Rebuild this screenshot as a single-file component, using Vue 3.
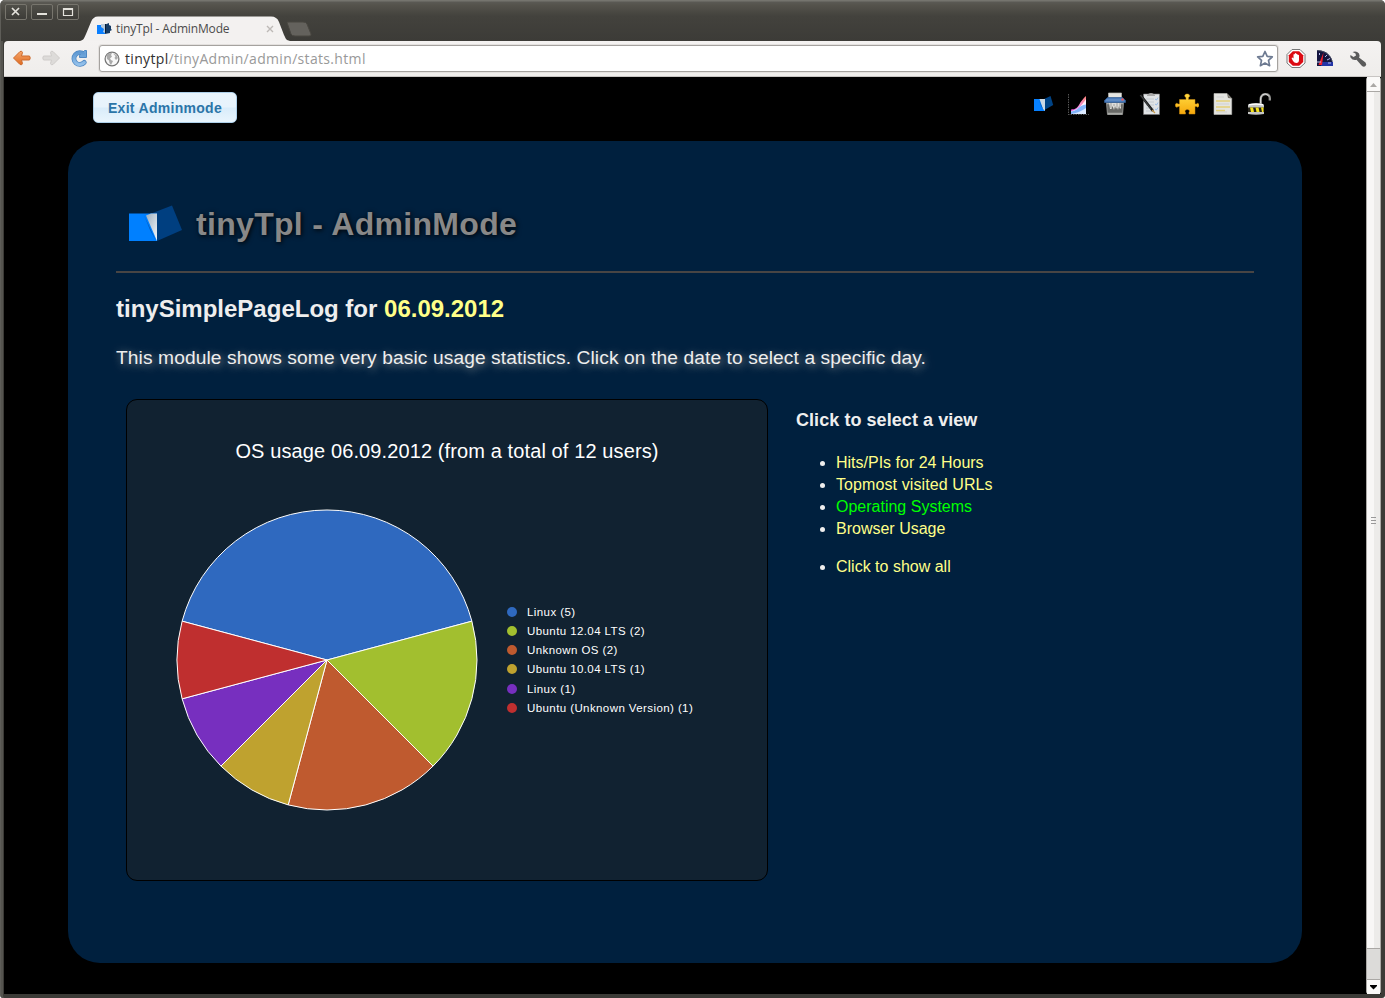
<script setup>
const slices = [
  { label: 'Linux (5)', n: 5, color: '#2f69bf' },
  { label: 'Ubuntu 12.04 LTS (2)', n: 2, color: '#a2bf2f' },
  { label: 'Unknown OS (2)', n: 2, color: '#bf5a2f' },
  { label: 'Ubuntu 10.04 LTS (1)', n: 1, color: '#bfa22f' },
  { label: 'Linux (1)', n: 1, color: '#772fbf' },
  { label: 'Ubuntu (Unknown Version) (1)', n: 1, color: '#bf2f2f' },
]
let angle = -75
for (const s of slices) {
  const pt = (a) => {
    const r = (a * Math.PI) / 180
    return `${(151 + 150 * Math.sin(r)).toFixed(2)} ${(151 - 150 * Math.cos(r)).toFixed(2)}`
  }
  const end = angle + s.n * 30
  s.d = `M151 151L${pt(angle)}A150 150 0 0 1 ${pt(end)}Z`
  angle = end
}
const views = ['Hits/PIs for 24 Hours', 'Topmost visited URLs', 'Operating Systems', 'Browser Usage']
</script>

<template>
  <div class="window">
    <header class="titlebar">
      <div class="controls">
        <span class="wbtn"><svg width="20" height="14"><path d="M6 3L13 10M13 3L6 10" stroke="#e4e2dc" stroke-width="1.7" /></svg></span>
        <span class="wbtn"><svg width="20" height="14"><path d="M5 9H15" stroke="#e4e2dc" stroke-width="2" /></svg></span>
        <span class="wbtn"><svg width="20" height="14"><path d="M5.500 3.500H14.500V10.500H5.500Z" stroke="#e4e2dc" fill="none" stroke-width="1.200" /><path d="M5 4H15" stroke="#e4e2dc" stroke-width="2" /></svg></span>
      </div>
      <div class="tab">
        <svg class="tabshape" width="214" height="25"><path d="M0 25C4 24 4 22 6 18L11 6Q13 0.500 18 0.500H191Q197 0.500 199 6L204 19C206 23 206 24 210 25Z" fill="#f3f1f0" /></svg>
        <svg class="fav" width="15" height="11"><path d="M7 2L12 0V2L14 3V6L15 7L13 8V10L8 11Z" fill="#163c66" /><path d="M0 2H8V11H0Z" fill="#0a7fff" /><path d="M4 1H8V10L6 9L7 6L4 4Z" fill="#b9cbdc" /><path d="M8 1H9V10H8Z" fill="#061a35" /></svg>
        <span class="tabtitle">tinyTpl - AdminMode</span>
        <svg class="tabx" width="8" height="8"><path d="M1 1L7 7M7 1L1 7" stroke="#bdb9b6" stroke-width="1.400" /></svg>
      </div>
      <svg class="newtab" width="26" height="16"><path d="M1 1.500Q1 1 3 1H17Q20 1 21 3L25 13Q25.500 15 23 15H9Q6 15 5 13Z" fill="#64625d" stroke="#494741" /></svg>
    </header>

    <div class="toolbar">
      <svg class="nav" width="90" height="30" viewBox="0 0 90 30">
        <defs>
          <linearGradient id="org" x1="0" y1="0" x2="0" y2="1"><stop offset="0" stop-color="#f7a76d" /><stop offset="1" stop-color="#de6a20" /></linearGradient>
          <linearGradient id="blu" x1="0" y1="0" x2="0" y2="1"><stop offset="0" stop-color="#5f99d2" /><stop offset="1" stop-color="#93c0ea" /></linearGradient>
        </defs>
        <path d="M1.500 14L8 7.500Q10 6.500 10.500 8.500L9.500 12H17.500Q19 14 17.500 16H9.500L10.500 19.500Q10 21.500 8 20.500Z" fill="url(#org)" stroke="#cd6b2e" stroke-linejoin="round" />
        <path d="M47.500 14L41 7.500Q39 6.500 38.500 8.500L39.500 12H31.500Q30 14 31.500 16H39.500L38.500 19.500Q39 21.500 41 20.500Z" fill="#dddbd9" stroke="#cfccca" stroke-linejoin="round" />
        <path d="M71.800 10.200A5.900 5.900 0 1 0 72.300 18.400" fill="none" stroke="#4f88c3" stroke-width="4.800" stroke-linecap="round" />
        <path d="M74.500 6.500V13.500H67.500V11.500L72.500 6.500Z" fill="#6ca4da" stroke="#4f88c3" stroke-linejoin="round" />
        <path d="M71.800 10.200A5.900 5.900 0 1 0 72.300 18.400" fill="none" stroke="url(#blu)" stroke-width="3.200" stroke-linecap="round" />
      </svg>
      <div class="omnibox">
        <svg width="16" height="16" viewBox="0 0 16 16"><circle cx="8" cy="8" r="6.900" fill="#f8f8f8" stroke="#777" stroke-width="1.300" /><path d="M2.500 4.500L5 2.300L8 2L7 4L8 5.500L6 7.500L7 9L9 10L8 12L7 14L5.500 12L5 9.500L3 8ZM9 2.500L12.500 4L14 7L12 9L10.500 7L11.500 5Z" fill="#aaa" /></svg>
        <span class="url"><b>tinytpl</b>/tinyAdmin/admin/stats.html</span>
        <svg class="star" width="18" height="18" viewBox="0 0 18 18"><path d="M9 1.500L11.200 6.300L16.300 6.900L12.500 10.400L13.600 15.700L9 13L4.400 15.700L5.500 10.400L1.700 6.900L6.800 6.300Z" fill="#fff" stroke="#6d7a91" stroke-width="1.700" stroke-linejoin="round" /></svg>
      </div>
      <svg class="ext" width="88" height="20" viewBox="0 0 88 20">
        <path d="M6 .5H14L19 5.500V14L14 18.500H6L1 14V5.500Z" fill="#fff" stroke="#777" />
        <path d="M6.800 2.300H13.200L17.200 6.200V13L13.200 16.800H6.800L2.800 13V6.200Z" fill="#dc0b12" />
        <path d="M7 12L5.500 9L6.500 8.500L7.500 9.500V5.500Q8.300 4.500 8.800 5.500V4.500Q9.600 3.500 10.200 4.500V5Q11 4.200 11.500 5.200V6Q12.500 5.300 13 6.300V11Q13 14 10.300 14Q8.300 14 7 12Z" fill="#fff" />
        <path d="M31 1.500C39 .5 46 6 47 15V17H31Z" fill="#14153f" /><path d="M31 1.500C38 1.500 44 5.500 46 12" stroke="#444b61" fill="none" />
        <path d="M35.500 13H47V17H35Z" fill="#2334a5" /><path d="M32.500 16L37.500 3.500L36 16Z" fill="#f1212c" /><path d="M31 13H35M39 8L41 6M41 11L44 9.500M33.500 6V4M42 14H45" stroke="#b7bce8" />
        <path d="M66.500 3Q70.500 1.500 73 4.500Q74 6.500 73 8.500L79.500 13.500Q81 15.500 79.500 17Q78 18.500 76 17L70.500 10.800Q67 12 64.500 8.500Q64 7 64.500 6L67.500 8L70 6.500L69.500 4.500Z" fill="#5b5b5b" />
      </svg>
    </div>

    <div class="viewport">
      <main class="page">
        <div class="topline">
          <button class="exit">Exit Adminmode</button>
          <nav class="icons">
            <svg viewBox="0 0 24 24"><path d="M12 7.500L19.500 4L22.200 13L13.500 18Z" fill="#004385" /><path d="M3 7H14V19H3Z" fill="#0680ff" /><path d="M8.500 7H14V19L12 17Z" fill="#cbd9e5" /><path d="M8 8L12.500 18L10 14Z" fill="#0b56a8" /></svg>
            <svg viewBox="0 0 24 24">
              <defs><linearGradient id="red" x1="1" y1="0" x2="0" y2="1"><stop offset="0" stop-color="#ff8178" /><stop offset=".55" stop-color="#f092e2" /><stop offset="1" stop-color="#d82cc9" /></linearGradient></defs>
              <path d="M4 22V17.500C8 17 9.500 17 12 13C14 9 16 7 19 4V22Z" fill="url(#red)" /><path d="M4 22V19C10 18 14 15 19 7V22Z" fill="#fff0fa" /><path d="M4 22V19.500C11 19 12 13 19 12.500V22Z" fill="#82b4fb" /><path d="M4 22Q12 21 19 16V22Z" fill="#dceaff" /><path d="M1.500 2V23M1 22.500H22" stroke="#555" stroke-dasharray="1.500 1" />
            </svg>
            <svg viewBox="0 0 24 24"><path d="M3.500 10H20.500L19.500 22.500H4.500Z" fill="#686966" stroke="#929390" /><path d="M4 11.500H20M5 21.500H19" stroke="#a9aaa6" stroke-width="1.500" /><path d="M5.500 1H18.500V7H5.500Z" fill="#e5e5e2" stroke="#b8b8b2" stroke-width=".7" /><path d="M4.500 5.500H19.500L22.500 8.500V10.500H1.500V8.500Z" fill="#4979b7" stroke="#315c93" stroke-width=".7" /><path d="M3 8H21" stroke="#739bce" /><path d="M18.500 7.500H20.500" stroke="#ff4f47" stroke-width="2" /><path d="M6 11H18V16L17 17L16 14L15 18L14 15L13 17L12 14L11 18L9.500 14L8.500 17L7 17Z" fill="#dededb" /><path d="M8 11V16M11 12V14M14 11V15M17 11V15" stroke="#777" stroke-width=".6" /></svg>
            <svg viewBox="0 0 24 24"><path d="M4.500 2H20.500V22.500H4.500Z" fill="#e0e3e5" stroke="#777" stroke-width=".6" /><path d="M8 3Q12 -1 16 3V4H8Z" fill="#aaa" /><path d="M7 7H15M7 10H15M7 13H15M7 16H15M7 19H15" stroke="#bcc3c9" stroke-width=".8" /><path d="M16 7L17.500 8L19 5.500M16 12L17.500 13L19 10.500M16 17L17.500 18L19 15.500" stroke="#83aee7" fill="none" stroke-width=".8" /><path d="M1.500 3L14 19" stroke="#17191a" stroke-width="2.400" /><path d="M13 18L16 21" stroke="#c79a4b" stroke-width="1.300" /><path d="M1.500 3L12 17" stroke="#666" stroke-width=".6" /></svg>
            <svg viewBox="0 0 24 24"><defs><linearGradient id="gold" x1="0" y1="0" x2="0" y2="1"><stop offset="0" stop-color="#ffdb42" /><stop offset="1" stop-color="#f6a80b" /></linearGradient></defs><path d="M4.500 7.500H11V5.500C8.500 4 10 2 12.200 2S16 4 13.500 5.500V7.500H20V12H21.500C22.500 10.500 24 11.500 24 13.200S22.500 16 21.500 14.500H20V22H14V20.500C15.500 18.500 13.500 17.500 12.300 17.500S9 18.500 10.500 20.500V22H4.500V14.500H3C2 16 .3 15 .3 13.200S2 10.500 3 12H4.500Z" fill="url(#gold)" stroke="#c88911" stroke-width=".5" /></svg>
            <svg viewBox="0 0 24 24"><path d="M3 1.500H16L20.700 6.500V22.500H3Z" fill="#e4e4e0" stroke="#c0c0ba" stroke-width=".6" /><path d="M16 1.500L20.700 6.500L17 6Z" fill="#77736a" /><path d="M5.500 5H13M5.500 12H18M5.500 20H16" stroke="#d0d1d2" /><path d="M5 9H19M5 15H19M5 18.500H14" stroke="#e3cf78" stroke-width="1.300" /></svg>
            <svg viewBox="0 0 24 24"><path d="M13.700 12V7.500C13.700 .5 22.800 .5 22.800 6V8.500" fill="none" stroke="#969693" stroke-width="2.300" /><path d="M13.600 11V7C14 1 20 1 22 4.500" fill="none" stroke="#e8e8e6" stroke-width=".9" /><path d="M1 12.500Q9 10.500 17 12.500V22Q9 23.500 1 22Z" fill="#c5c6c4" /><path d="M2 12.800Q9 11.300 16 12.800" stroke="#fff" stroke-width="1.500" fill="none" /><path d="M1 15.500H17V20H1Z" fill="#25231a" /><path d="M3 15.500H6L7 20H4ZM8.500 15.500H11.500L12.500 20H9.500ZM14 15.500H16.500V20H15Z" fill="#f6e31c" /></svg>
          </nav>
        </div>

        <section class="panel">
          <h1>
            <svg class="logo" width="54" height="38" viewBox="0 0 54 38"><defs><linearGradient id="fold" x1="0" y1="0" x2="1" y2="1"><stop offset="0" stop-color="#9cafbf" /><stop offset="1" stop-color="#f4f7fa" /></linearGradient></defs><path d="M17 10.500L43 .5L53 25L28 36Z" fill="#003f80" /><path d="M0 8.500H28V36H0Z" fill="#0080ff" /><path d="M15 10L27 36L21 25Z" fill="#00469a" opacity=".65" /><path d="M17 10.500L22 8.500H28V36Z" fill="url(#fold)" /></svg>
            <span>tinyTpl - AdminMode</span>
          </h1>
          <h2>tinySimplePageLog for <a>06.09.2012</a></h2>
          <p class="intro">This module shows some very basic usage statistics. Click on the date to select a specific day.</p>
          <div class="row">
            <figure class="chart">
              <figcaption>OS usage 06.09.2012 (from a total of 12 users)</figcaption>
              <div class="plot">
                <svg width="302" height="302"><path v-for="s in slices" :key="s.d" :d="s.d" :fill="s.color" stroke="#fff" stroke-linejoin="round" /></svg>
                <ul class="legend">
                  <li v-for="s in slices" :key="s.label"><svg width="10" height="10"><circle cx="5" cy="5" r="5" :fill="s.color" /></svg><span>{{ s.label }}</span></li>
                </ul>
              </div>
            </figure>
            <aside>
              <h3>Click to select a view</h3>
              <ul>
                <li v-for="v in views" :key="v" :class="{ active: v === 'Operating Systems' }"><a>{{ v }}</a></li>
              </ul>
              <ul><li><a>Click to show all</a></li></ul>
            </aside>
          </div>
        </section>
      </main>
      <div class="scroll">
        <span class="sb up"><svg width="13" height="14"><path d="M3 10L6.500 6L10 10Z" fill="#aaa8a5" /></svg></span>
        <span class="thumb"><i></i><i></i><i></i></span>
        <span class="trough"></span>
        <span class="sb"><svg width="13" height="14"><path d="M3 5H10V6L6.500 9.500L3 6Z" fill="#000" /></svg></span>
      </div>
    </div>
  </div>
</template>

<style>
body { margin: 0; background: #fff; overflow: hidden; }
</style>

<style scoped>
* { box-sizing: border-box; }
.window { width: 1385px; height: 998px; background: #3c3b37; border-radius: 5px 5px 3px 3px; padding: 0 4px 4px 3px; border-left: 1px solid #5e5d58; font-family: "Liberation Sans", Arial, sans-serif; overflow: hidden; box-shadow: inset 2px 0 #55544f; }
.titlebar { height: 41px; margin: 0 -4px 0 -3px; padding-left: 4px; display: flex; background: linear-gradient(#75746e 0, #75746e 1px, #5a5954 2px, #55534c 5px, #43423d 16px, #3c3b37 41px); }
.controls { display: flex; gap: 4px; padding-top: 4px; width: 75px; flex: none; }
.wbtn { width: 22px; height: 16px; border: 1px solid #77756d; border-radius: 2px; background: linear-gradient(#504f49, #3d3c38); display: flex; }
.wbtn svg { display: block; }
.tab { position: relative; width: 207px; height: 25px; margin-top: 16px; flex: none; display: flex; align-items: center; padding-left: 17px; }
.tabshape { position: absolute; left: 0; top: 0; }
.fav { position: relative; flex: none; margin: 0 4px 0 0; }
.tabtitle { position: relative; font: 12px/24px "Open Sans", "Noto Sans", sans-serif; color: #4b4b4b; width: 150px; white-space: nowrap; letter-spacing: -.15px; }
.tabx { position: relative; margin-top: 1px; flex: none; }
.newtab { margin: 21px 0 0 -1px; }
.toolbar { height: 36px; background: linear-gradient(#f4f2f1, #efedeb); border-bottom: 1px solid #c8c5c3; border-radius: 4px 4px 0 0; display: flex; padding: 4px 0 0 8px; width: 1377px; }
.nav { margin-right: -3px; margin-top: -1px; flex: none; }
.omnibox { width: 1179px; height: 27px; background: #fff; border: 1px solid #a5a29f; box-shadow: 0 0 0 1px #e3e0de; border-radius: 3px; display: flex; align-items: center; padding: 0 3px 0 4px; flex: none; }
.url { font: 14px/24px "Open Sans", "Noto Sans", sans-serif; color: #999; margin-left: 5px; flex: 1; letter-spacing: .33px; }
.url b { font-weight: 400; color: #303030; }
.ext { margin: 4px 0 0 8px; flex: none; }
.viewport { display: flex; height: 917px; width: 1377px; background: #000; }
.page { width: 1362px; height: 917px; padding-left: 64px; }
.topline { height: 64px; width: 1234px; display: flex; justify-content: space-between; padding: 15px 31px 0 25px; }
.exit { width: 144px; height: 31px; padding: 0; border: 1px solid #aed0ea; border-radius: 5px; background: linear-gradient(#e9f4fc 0, #e7f3fc 48%, #d9ecfa 52%, #e9f5fd 100%); color: #2b75a8; font: bold 14px/28px "Liberation Sans", Arial, sans-serif; letter-spacing: .3px; }
.icons { display: flex; gap: 12px; }
.icons svg { width: 24px; height: 24px; display: block; }
.panel { width: 1234px; height: 822px; background: #00203e; border-radius: 32px; padding: 48px 48px 0; color: #eee; }
h1 { margin: 0; height: 84px; border-bottom: 2px solid #484544; display: flex; padding: 16px 0 0 13px; font-size: 32px; line-height: 38px; color: #888; letter-spacing: .31px; text-shadow: 1px 1px 5px #000; }
.logo { margin-right: 13px; flex: none; }
h2 { margin: 20px 0 0; font-size: 24px; line-height: 32px; }
h2 a { color: #ffff88; }
.intro { margin: 20px 0 0; font-size: 19.2px; line-height: 26px; letter-spacing: .1px; text-shadow: 2px 2px 8px #999; white-space: nowrap; }
.row { display: flex; margin: 28px 0 0 10px; }
.chart { margin: 0; width: 642px; height: 482px; border: 1px solid #000; border-radius: 11px; background: #112231; padding-top: 38px; color: #fff; }
figcaption { text-align: center; font-size: 20px; line-height: 26px; letter-spacing: .11px; }
.plot { display: flex; margin: 45px 0 0 49px; }
.plot > svg { flex: none; display: block; }
.legend { list-style: none; padding: 0; margin: 93px 0 0 29px; font-size: 11.5px; letter-spacing: .41px; }
.legend li { height: 19.25px; display: flex; align-items: center; white-space: nowrap; }
.legend svg { margin-right: 10px; }
aside { margin-left: 28px; padding-top: 10px; }
h3 { margin: 0 0 21px; font-size: 18px; line-height: 22px; letter-spacing: .06px; }
aside ul { margin: 0 0 16px; padding-left: 40px; font-size: 16px; line-height: 22px; }
aside li a { color: #ffff88; }
aside li:nth-child(2) a { letter-spacing: .1px; }
aside .active a { color: #00ff00; }
.scroll { width: 15px; height: 917px; border: 1px solid #aaa8a5; border-top: 0; border-bottom: 0; display: flex; flex-direction: column; background: #dcdbd9; border-radius: 3px; }
.sb { height: 14px; background: #faf9f8; display: flex; flex: none; }
.up { height: 15px; border-bottom: 1px solid #aaa8a5; }
.thumb { height: 857px; background: linear-gradient(90deg, #f8f7f6 55%, #ecebe9 55%); border-bottom: 1px solid #aaa8a5; display: flex; flex-direction: column; align-items: center; justify-content: center; gap: 2px; }
.thumb i { width: 5px; height: 1px; background: #999; }
.trough { height: 31px; border-bottom: 1px solid #aaa8a5; }
</style>
